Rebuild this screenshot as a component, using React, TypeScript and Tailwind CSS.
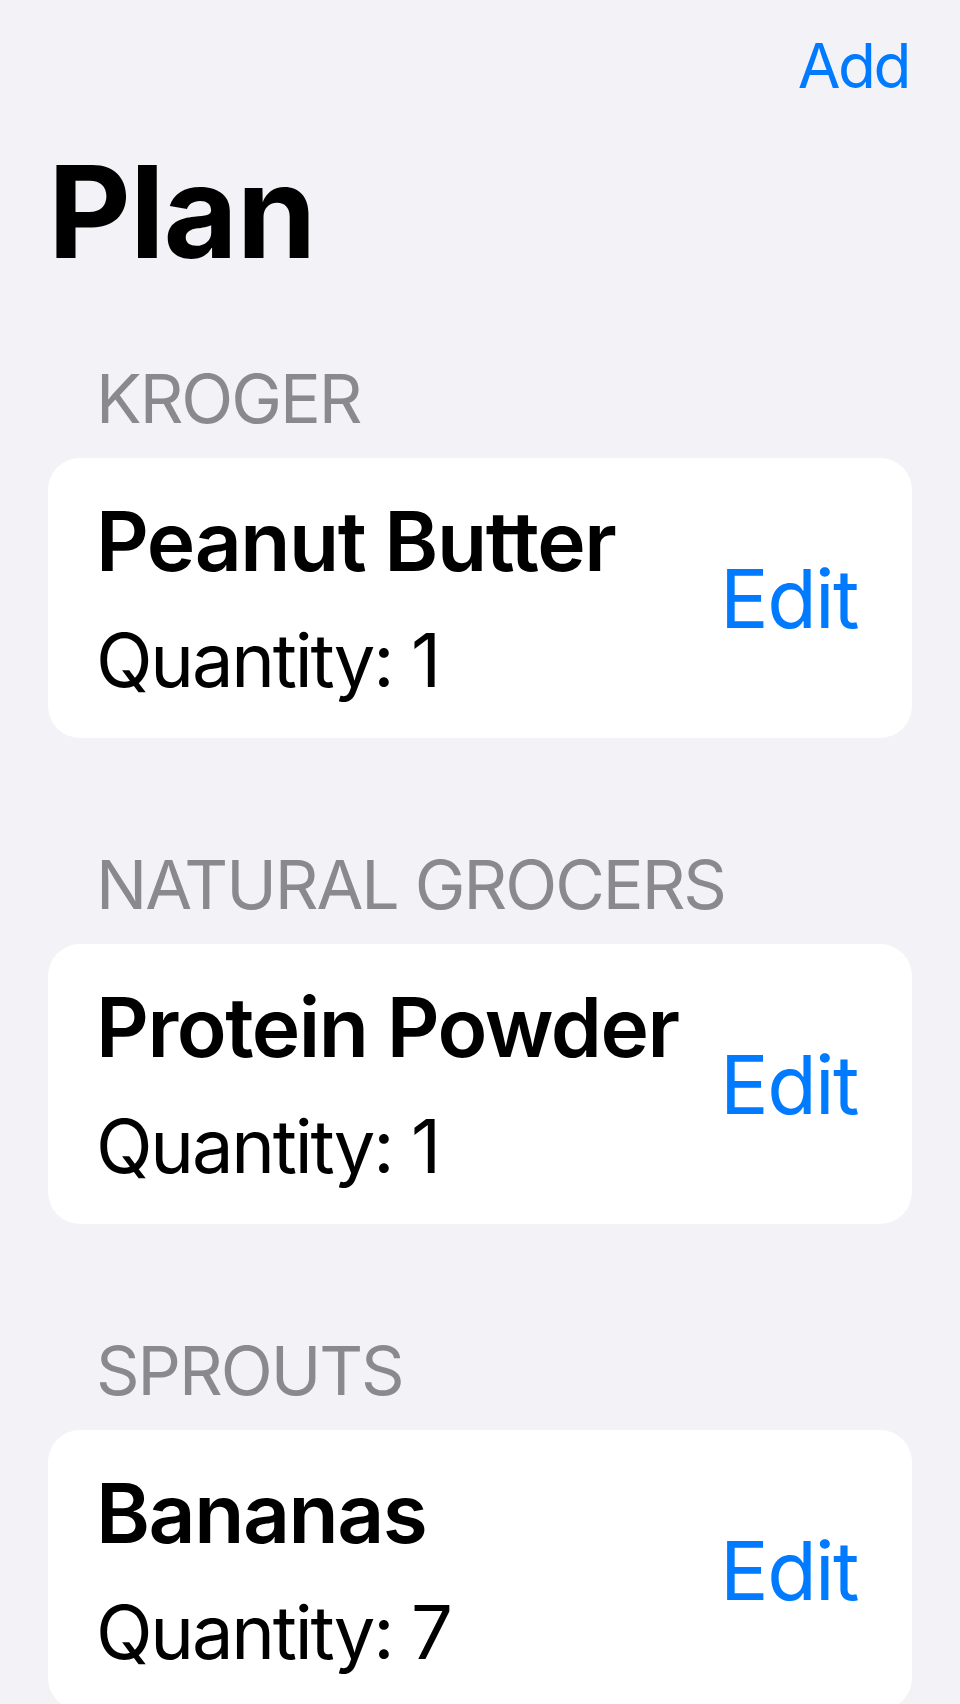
const stores = [
  { name: "KROGER", item: "Peanut Butter", qty: 1 },
  { name: "NATURAL GROCERS", item: "Protein Powder", qty: 1 },
  { name: "SPROUTS", item: "Bananas", qty: 7 },
];

export default function App() {
  return (
    <div className="h-[1704px] overflow-hidden bg-[#f2f2f7] px-[48px] font-['Inter','Noto_Sans',sans-serif] text-black">
      {/* Nav bar */}
      <div className="flex justify-end pt-[35px] pr-[3px]">
        <button className="text-[62px] leading-none tracking-[-0.04em] text-[#007aff]">
          Add
        </button>
      </div>

      <h1 className="mt-[51px] text-[128px] font-bold leading-none tracking-[-0.008em]">
        Plan
      </h1>

      {/* Sections */}
      <div className="mt-[88px] flex flex-col gap-[112px]">
        {stores.map((s) => (
          <section key={s.name} className="flex flex-col gap-[26px]">
            <h2 className="pl-[48px] text-[68px] leading-none tracking-[-0.03em] text-[#8a8a8e]">
              {s.name}
            </h2>
            <div className="flex items-center justify-between rounded-[32px] bg-white pl-[48px] pr-[54px] pt-[43px] pb-[41px]">
              <div className="flex flex-col gap-[40px]">
                <span className="text-[82px] font-semibold leading-none tracking-[-0.018em]">
                  {s.item}
                </span>
                <span className="text-[74px] leading-none tracking-[-0.03em]">
                  Quantity: {s.qty}
                </span>
              </div>
              <button className="text-[81px] leading-none tracking-[-0.02em] text-[#007aff]">
                Edit
              </button>
            </div>
          </section>
        ))}
      </div>
    </div>
  );
}
